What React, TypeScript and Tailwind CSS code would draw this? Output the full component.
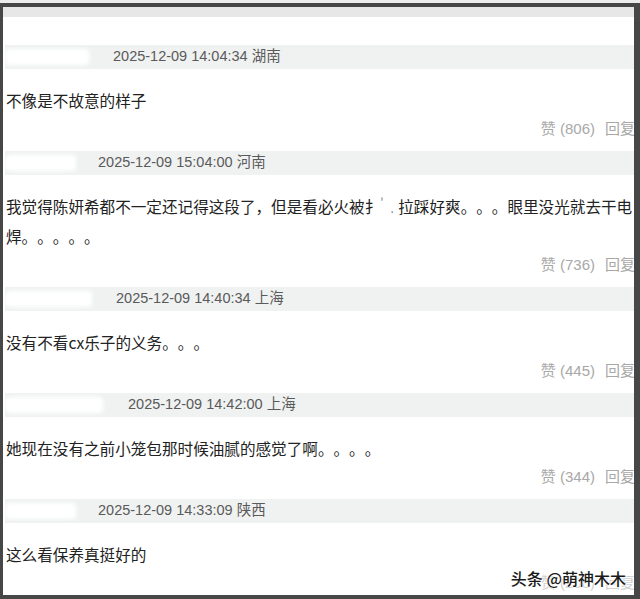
const font = { fontFamily: '"Liberation Sans", "Noto Sans CJK SC", sans-serif' };
const cjk = { fontFamily: '"Noto Sans CJK SC", "Liberation Sans", sans-serif' };

type Comment = {
  nameWidth: number;
  time: string;
  lines: React.ReactNode[];
  likes: string;
};

const comments: Comment[] = [
  {
    nameWidth: 96,
    time: '2025-12-09 14:04:34 湖南',
    lines: ['不像是不故意的样子'],
    likes: '806',
  },
  {
    nameWidth: 81,
    time: '2025-12-09 15:04:00 河南',
    lines: [
      <>
        我觉得陈妍希都不一定还记得这段了，但是看必火被扌
        <span className="inline-block w-[18px] text-[12px] text-[#888]">
          <span className="relative top-[-6px]">'</span>
          <span className="ml-[7px]">.</span>
        </span>
        拉踩好爽。。。眼里没光就去干电
      </>,
      '焊。。。。。',
    ],
    likes: '736',
  },
  {
    nameWidth: 99,
    time: '2025-12-09 14:40:34 上海',
    lines: ['没有不看cx乐子的义务。。。'],
    likes: '445',
  },
  {
    nameWidth: 111,
    time: '2025-12-09 14:42:00 上海',
    lines: ['她现在没有之前小笼包那时候油腻的感觉了啊。。。。'],
    likes: '344',
  },
  {
    nameWidth: 81,
    time: '2025-12-09 14:33:09 陕西',
    lines: ['这么看保养真挺好的'],
    likes: '208',
  },
];

function CommentItem({ c, faded }: { c: Comment; faded?: boolean }) {
  return (
    <div className="mb-[12px]">
      <div className="ml-[2px] flex h-[24px] items-center bg-[#f0f2f2]">
        <div className="flex h-full shrink-0 items-center" style={{ width: c.nameWidth }}>
          <div className="h-[16px] w-[88%] rounded-sm bg-white blur-[2px]" />
        </div>
        <span className="pl-[12px] text-[14.5px] text-[#5a5a5a]">{c.time}</span>
      </div>
      <div
        className="mt-[17px] pl-[3px] text-[15.6px] leading-[28px] text-[#222] [text-spacing-trim:space-all]"
        style={cjk}
      >
        {c.lines.map((l, i) => (
          <div key={i} className="whitespace-nowrap">
            {l}
          </div>
        ))}
      </div>
      <div
        className={
          faded
            ? 'mr-[-1px] mt-[5px] flex h-[20px] items-center justify-end gap-[10px] text-[15px] text-[#d0d0d0]'
            : 'mr-[-1px] mt-[5px] flex h-[20px] items-center justify-end gap-[10px] text-[15px] text-[#a8a8a8]'
        }
      >
        <span>赞 ({c.likes})</span>
        <span>回复</span>
      </div>
    </div>
  );
}

export default function App() {
  return (
    <div className="flex h-[599px] w-[640px] flex-col bg-[#ececec] pt-[3px]" style={font}>
      <div className="flex flex-1 flex-col overflow-hidden border-b-[4px] border-l-[3px] border-r-[6px] border-t-[4px] border-[#474747]">
        <div className="h-[10px] shrink-0 bg-[#e7e7e7]" />
        <div className="relative flex-1 overflow-hidden bg-white pt-[28px]">
          {comments.map((c, i) => (
            <CommentItem key={i} c={c} faded={i === comments.length - 1} />
          ))}
          <div
            className="absolute bottom-[5px] right-[8px] text-[16px] font-medium text-[#1a1a1a]"
            style={{ ...cjk, textShadow: '0 0 2px #fff, 0 0 2px #fff, 0 0 3px #fff' }}
          >
            头条 @萌神木木
          </div>
        </div>
      </div>
    </div>
  );
}
